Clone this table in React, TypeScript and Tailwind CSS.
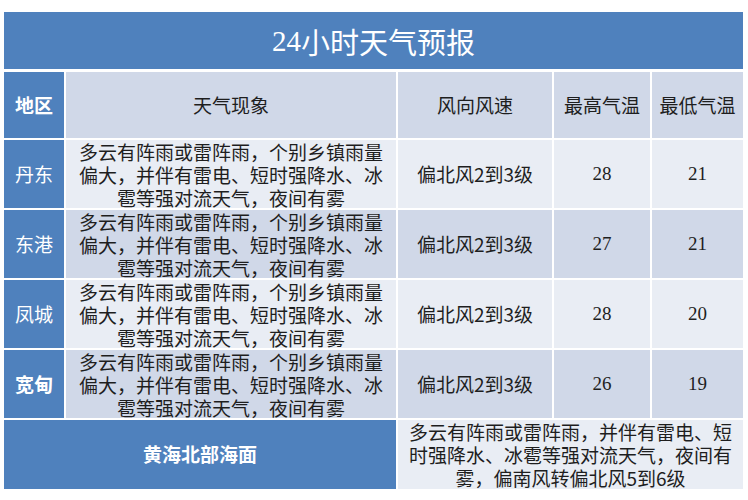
import React from "react";

const cjk = { fontFamily: '"Noto Sans CJK SC", "Noto Sans", sans-serif' };
const serif = { fontFamily: '"Liberation Serif", "Noto Sans CJK SC", serif' };

const rows = [
  { name: "丹东", hi: "28", lo: "21", dark: false, bold: false },
  { name: "东港", hi: "27", lo: "21", dark: true, bold: false },
  { name: "凤城", hi: "28", lo: "20", dark: false, bold: false },
  { name: "宽甸", hi: "26", lo: "19", dark: true, bold: true },
];

export default function App() {
  return (
    <div className="w-[748px] h-[500px] bg-white pt-[12px] pl-[4px]" style={cjk}>
      <div className="w-[739px] flex flex-col">
        <div className="h-[57px] bg-[#4f81bd] flex items-center justify-center text-white text-[29px] leading-none pt-[2px]">
          <span style={serif}>24</span>
          <span>小时天气预报</span>
        </div>
        <div className="mt-[3px] grid grid-cols-[60px_330px_154px_96px_91px] gap-[2px] bg-white text-[#1e1e1e] text-[19px]">
          <div className="h-[66px] bg-[#4f81bd] text-white font-bold flex items-center justify-center">地区</div>
          <div className="h-[66px] bg-[#d0d8e8] flex items-center justify-center">天气现象</div>
          <div className="h-[66px] bg-[#d0d8e8] flex items-center justify-center">风向风速</div>
          <div className="h-[66px] bg-[#d0d8e8] flex items-center justify-center">最高气温</div>
          <div className="h-[66px] bg-[#d0d8e8] flex items-center justify-center">最低气温</div>
          {rows.map((r) => {
            const bg = r.dark ? "bg-[#d0d8e8]" : "bg-[#e9edf4]";
            return (
              <React.Fragment key={r.name}>
                <div className={"h-[68px] bg-[#4f81bd] text-white flex items-center justify-center " + (r.bold ? "font-bold" : "font-normal")}>
                  {r.name}
                </div>
                <div className={"h-[68px] flex flex-col items-center justify-center leading-[23px] whitespace-nowrap " + bg}>
                  <div>多云有阵雨或雷阵雨，个别乡镇雨量</div>
                  <div>偏大，并伴有雷电、短时强降水、冰</div>
                  <div>雹等强对流天气，夜间有雾</div>
                </div>
                <div className={"h-[68px] flex items-center justify-center " + bg}>偏北风2到3级</div>
                <div className={"h-[68px] flex items-center justify-center " + bg} style={serif}>{r.hi}</div>
                <div className={"h-[68px] flex items-center justify-center " + bg} style={serif}>{r.lo}</div>
              </React.Fragment>
            );
          })}
          <div className="col-span-2 h-[69px] bg-[#4f81bd] text-white font-bold flex items-center justify-center">黄海北部海面</div>
          <div className="col-span-3 h-[69px] bg-[#e9edf4] flex flex-col items-center justify-center leading-[23px] whitespace-nowrap">
            <div>多云有阵雨或雷阵雨，并伴有雷电、短</div>
            <div>时强降水、冰雹等强对流天气，夜间有</div>
            <div>雾，偏南风转偏北风5到6级</div>
          </div>
        </div>
      </div>
    </div>
  );
}
